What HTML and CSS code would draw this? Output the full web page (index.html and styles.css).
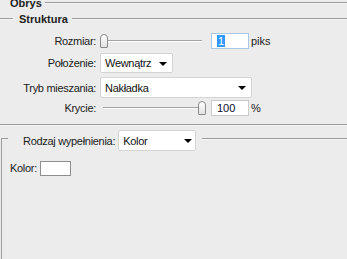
FILE: index.html
```
<!DOCTYPE html>
<html lang="pl">

<head>
    <meta charset="UTF-8">
    <meta name="viewport" content="width=device-width, initial-scale=1.0">
    <title>Obrys</title>
    <link rel="stylesheet" href="styles.css">
</head>

<body>
    <main class="panel">
        <div class="head head-main">
            <span class="head-title">Obrys</span>
            <span class="rule"></span>
        </div>

        <div class="head head-sub">
            <span class="rule rule-lead"></span>
            <span class="head-title">Struktura</span>
            <span class="rule"></span>
        </div>

        <div class="row row-size">
            <label class="label">Rozmiar:</label>
            <div class="slider">
                <span class="track"></span>
                <span class="thumb"></span>
            </div>
            <div class="field field-focus"><span class="selected">1</span></div>
            <span class="unit">piks</span>
        </div>

        <div class="row row-pos">
            <label class="label">Położenie:</label>
            <div class="select select-pos">
                <span>Wewnątrz</span>
                <span class="arrow"></span>
            </div>
        </div>

        <div class="row row-mode">
            <label class="label">Tryb mieszania:</label>
            <div class="select select-mode">
                <span>Nakładka</span>
                <span class="arrow"></span>
            </div>
        </div>

        <div class="row row-opacity">
            <label class="label">Krycie:</label>
            <div class="slider">
                <span class="track"></span>
                <span class="thumb thumb-end"></span>
            </div>
            <div class="field">100</div>
            <span class="unit">%</span>
        </div>

        <div class="separator"></div>

        <section class="fill">
            <div class="fill-head">
                <span class="corner"></span>
                <label class="fill-label">Rodzaj wypełnienia:</label>
                <div class="select select-fill">
                    <span>Kolor</span>
                    <span class="arrow"></span>
                </div>
                <span class="rule rule-fill"></span>
            </div>
            <div class="fill-body">
                <label class="color-label">Kolor:</label>
                <span class="swatch"></span>
            </div>
        </section>
    </main>
</body>

</html>
```

FILE: styles.css
```
body, html {
    margin: 0;
    padding: 0;
    height: 100%;
    overflow: hidden;
    background-color: #ececec;
}

.panel {
    font-family: 'Liberation Sans', Arial, sans-serif;
    font-size: 11px;
    letter-spacing: -0.3px;
    color: #1b1b1b;
    margin-top: -3px;
    height: 262px;
    display: flex;
    flex-direction: column;
}

/* section headers */
.head {
    display: flex;
    align-items: center;
    height: 14px;
}

.head-title {
    font-weight: bold;
    color: #222;
    letter-spacing: 0;
}

.head-main {
    height: 12px;
}

.head-main .head-title {
    margin-left: 10px;
    margin-right: 3px;
}

.head-sub {
    margin-top: 3px;
}

.head-sub .head-title {
    margin: 0 4px 0 6px;
}

.rule {
    flex: 1;
    border-top: 1px solid #9c9c9c;
    border-bottom: 1px solid #f6f6f6;
}

.rule-lead {
    flex: none;
    width: 13px;
}

/* rows */
.row {
    display: flex;
    align-items: center;
}

.label {
    width: 96px;
    text-align: right;
    margin-right: 4px;
}

.row-size {
    height: 16px;
    margin-top: 7px;
}

.row-pos {
    height: 20px;
    margin-top: 4px;
}

.row-mode {
    height: 21px;
    margin-top: 4px;
}

.row-opacity {
    height: 16px;
    margin-top: 2px;
}

/* slider */
.slider {
    position: relative;
    width: 106px;
    height: 14px;
    margin-right: 5px;
}

.track {
    position: absolute;
    left: 3px;
    right: 4px;
    top: 6px;
    border-top: 1px solid #a4a4a4;
    border-bottom: 1px solid #ffffff;
}

.thumb {
    position: absolute;
    left: 0;
    top: 0;
    width: 6px;
    height: 12px;
    background: linear-gradient(#ffffff, #e2e2e2);
    border: 1px solid #8a8a8a;
    border-radius: 4px 4px 1px 1px;
}

.thumb-end {
    left: 98px;
}

/* text fields */
.field {
    box-sizing: border-box;
    width: 38px;
    height: 16px;
    background-color: #ffffff;
    border: 1px solid #cbcbcb;
    padding-left: 5px;
    line-height: 14px;
    color: #0a0a2a;
    letter-spacing: 0;
}

.field-focus {
    border-color: #a8c8e6;
}

.selected {
    background-color: #3399ff;
    color: #ffffff;
    padding: 0 1px;
}

.unit {
    margin-left: 2px;
    letter-spacing: 0;
}

/* dropdowns */
.select {
    box-sizing: border-box;
    height: 100%;
    background-color: #ffffff;
    border: 1px solid #d4d4d4;
    border-radius: 2px;
    display: flex;
    align-items: center;
    justify-content: space-between;
    padding: 0 5px 0 4px;
    color: #111;
}

.select-pos {
    width: 73px;
}

.select-mode {
    width: 152px;
}

.select-fill {
    width: 78px;
    height: 21px;
    padding-right: 3px;
}

.arrow {
    width: 0;
    height: 0;
    border-left: 4px solid transparent;
    border-right: 4px solid transparent;
    border-top: 4px solid #000;
    margin-top: 1px;
}

.separator {
    margin-top: 8px;
    border-top: 1px solid #9c9c9c;
    border-bottom: 1px solid #f6f6f6;
}

/* fill group */
.fill {
    flex: 1;
    margin: 4px 0 0 1px;
    display: flex;
    flex-direction: column;
}

.fill-head {
    display: flex;
    align-items: flex-start;
    height: 21px;
}

.corner {
    width: 6px;
    height: 13px;
    margin-top: 8px;
    border-top: 1px solid #9c9c9c;
    border-left: 1px solid #9c9c9c;
}

.fill-label {
    align-self: center;
    margin-left: 15px;
    margin-right: 3px;
}

.rule-fill {
    margin-top: 8px;
    margin-left: 6px;
}

.fill-body {
    flex: 1;
    border-left: 1px solid #9c9c9c;
    padding: 10px 0 0 8px;
    display: flex;
    align-items: flex-start;
}

.color-label {
    line-height: 15px;
    margin-right: 3px;
}

.swatch {
    box-sizing: border-box;
    width: 31px;
    height: 15px;
    background-color: #ffffff;
    border: 1px solid #8e8e8e;
}
```
